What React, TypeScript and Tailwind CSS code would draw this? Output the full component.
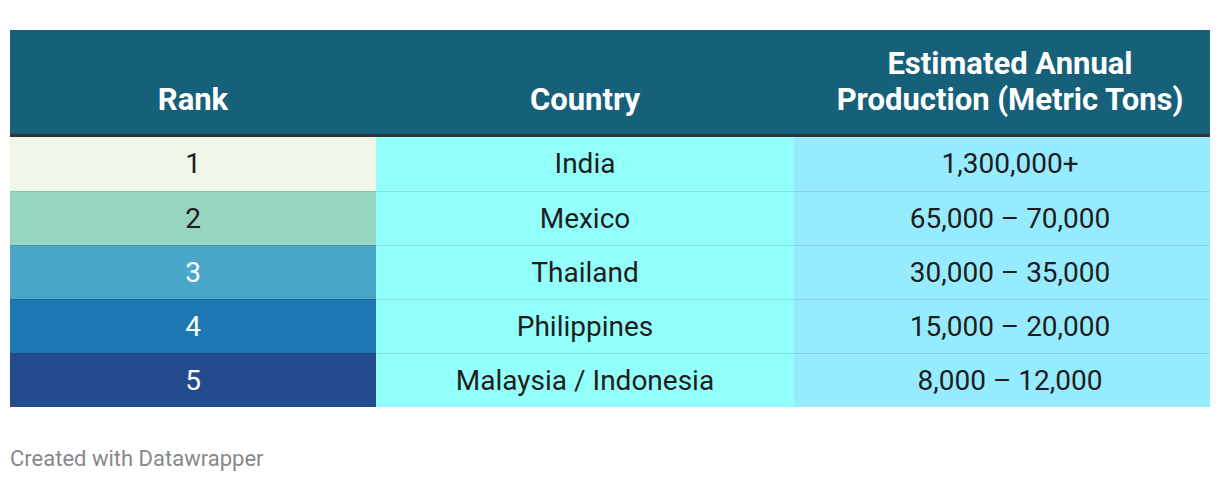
import React from "react";

const rows = [
  { rank: "1", country: "India", prod: "1,300,000+", bg: "bg-[#eff7e8]", tc: "text-[#1d1d1d]" },
  { rank: "2", country: "Mexico", prod: "65,000 – 70,000", bg: "bg-[#98d5c1]", tc: "text-[#1d1d1d]" },
  { rank: "3", country: "Thailand", prod: "30,000 – 35,000", bg: "bg-[#4ba7c9]", tc: "text-white" },
  { rank: "4", country: "Philippines", prod: "15,000 – 20,000", bg: "bg-[#1d78b5]", tc: "text-white" },
  { rank: "5", country: "Malaysia / Indonesia", prod: "8,000 – 12,000", bg: "bg-[#244b8b]", tc: "text-white" },
];

export default function App() {
  return (
    <div className="w-[1220px] h-[482px] bg-white pt-[30px] px-[10px]" style={{ fontFamily: "Roboto, 'Liberation Sans', sans-serif" }}>
      <div className="w-[1200px]">
        <div className="grid grid-cols-[366px_418px_416px] bg-[#17607a] text-white font-bold text-[31px] leading-[36px] border-b-[3px] border-[#333333]">
          <div className="flex items-end justify-center pt-4 pb-4 h-[104px]">Rank</div>
          <div className="flex items-end justify-center pt-4 pb-4 h-[104px]">Country</div>
          <div className="flex items-end justify-center pt-4 pb-4 pl-4 h-[104px] text-center">
            <span>Estimated Annual<br />Production (Metric Tons)</span>
          </div>
        </div>
        {rows.map((r, i) => (
          <div key={r.rank} className="grid grid-cols-[366px_418px_416px] text-[28px] leading-[36px] text-[#1d1d1d]">
            <div className={`${r.bg} ${r.tc} flex items-center justify-center h-[54px] ${i > 0 ? "border-t border-black/10" : ""}`}>{r.rank}</div>
            <div className={`bg-[#93fffa] flex items-center justify-center h-[54px] ${i > 0 ? "border-t border-black/10" : ""}`}>{r.country}</div>
            <div className={`bg-[#96ebff] flex items-center justify-center pl-4 h-[54px] ${i > 0 ? "border-t border-black/10" : ""}`}>{r.prod}</div>
          </div>
        ))}
        <div className="mt-[40px] text-[22px] leading-[24px] text-[#888888]">Created with Datawrapper</div>
      </div>
    </div>
  );
}
